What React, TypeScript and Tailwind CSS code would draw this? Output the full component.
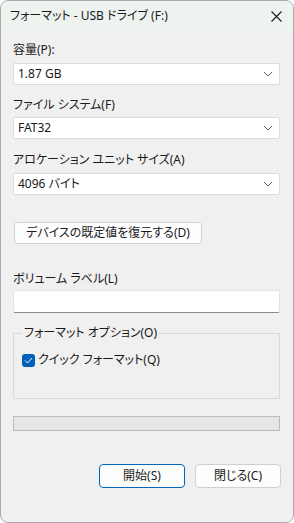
import React from 'react';

const font = {
  fontFamily: '"Noto Sans", "Noto Sans CJK JP", sans-serif',
};

const Chevron = () => (
  <svg width="10" height="6" viewBox="0 0 10 6" className="shrink-0">
    <polyline points="1,1 5,5 9,1" fill="none" stroke="#5f5f5f" strokeWidth="1" />
  </svg>
);

const Select = ({ value }: { value: string }) => (
  <div className="flex items-center justify-between h-[22px] w-[267px] bg-white border border-[#dcdcdc] rounded-[2px] pl-[4px] pr-[6px] text-[12px] text-[#1a1a1a]">
    <span>{value}</span>
    <Chevron />
  </div>
);

const Label = ({ children }: { children: React.ReactNode }) => (
  <div className="h-[16px] leading-[16px] text-[12px] text-[#1a1a1a]">{children}</div>
);

const App = () => {
  return (
    <div className="w-[294px] h-[523px] bg-white [font-feature-settings:'palt']" style={font}>
      <div className="w-[294px] h-[523px] flex flex-col border border-[#a9a9a9] rounded-[8px] overflow-hidden bg-[#f0f0f0]">
        {/* title bar */}
        <div className="h-[30px] shrink-0 flex items-center justify-between bg-[#eef3ef] pl-[9px] pr-[11px]">
          <span className="text-[12px] text-[#1a1a1a]">フォーマット - USB ドライブ (F:)</span>
          <svg width="11" height="11" viewBox="0 0 11 11">
            <path d="M0.5 0.5 L10.5 10.5 M10.5 0.5 L0.5 10.5" stroke="#1a1a1a" strokeWidth="1.1" />
          </svg>
        </div>

        <div className="flex flex-col pl-[12px] pr-[12px] pt-[11px]">
          <Label>容量(P):</Label>
          <div className="mt-[5px]"><Select value="1.87 GB" /></div>

          <div className="mt-[12px]"><Label>ファイル システム(F)</Label></div>
          <div className="mt-[4px]"><Select value="FAT32" /></div>

          <div className="mt-[13px]"><Label>アロケーション ユニット サイズ(A)</Label></div>
          <div className="mt-[5px]"><Select value="4096 バイト" /></div>

          <button className="mt-[27px] ml-[1px] w-[188px] h-[22px] bg-[#fdfdfd] border border-[#d0d0d0] rounded-[4px] text-[12px] text-[#1a1a1a]">
            デバイスの既定値を復元する(D)
          </button>

          <div className="mt-[27px]"><Label>ボリューム ラベル(L)</Label></div>
          <div className="mt-[3px] h-[23px] w-[267px] bg-white border border-[#e3e3e3] border-b-[#8c8c8c] rounded-[2px]" />

          <fieldset className="mt-[12px] w-[267px] border border-[#dadada] pl-[8px] pb-[30px]">
            <legend className="ml-[0px] px-[2px] text-[12px] leading-[16px] text-[#1a1a1a]">フォーマット オプション(O)</legend>
            <div className="mt-[11px] flex items-center gap-[3px] h-[16px]">
              <div className="w-[13px] h-[13px] rounded-[3px] bg-[#005fb8] flex items-center justify-center">
                <svg width="9" height="7" viewBox="0 0 9 7">
                  <polyline points="1,3.5 3.5,6 8,1" fill="none" stroke="white" strokeWidth="1" />
                </svg>
              </div>
              <span className="text-[12px] text-[#1a1a1a]">クイック フォーマット(Q)</span>
            </div>
          </fieldset>

          <div className="mt-[17px] w-[267px] h-[15px] bg-[#e6e6e6] border border-[#bcbcbc]" />

          <div className="mt-[33px] flex justify-end gap-[10px] pr-[0px]">
            <button className="w-[86px] h-[24px] bg-[#fdfdfd] border border-[#0067c0] rounded-[4px] text-[12px] text-[#1a1a1a]">
              開始(S)
            </button>
            <button className="w-[86px] h-[24px] bg-[#fdfdfd] border border-[#d0d0d0] rounded-[4px] text-[12px] text-[#1a1a1a]">
              閉じる(C)
            </button>
          </div>
        </div>
      </div>
    </div>
  );
};

export default App;
